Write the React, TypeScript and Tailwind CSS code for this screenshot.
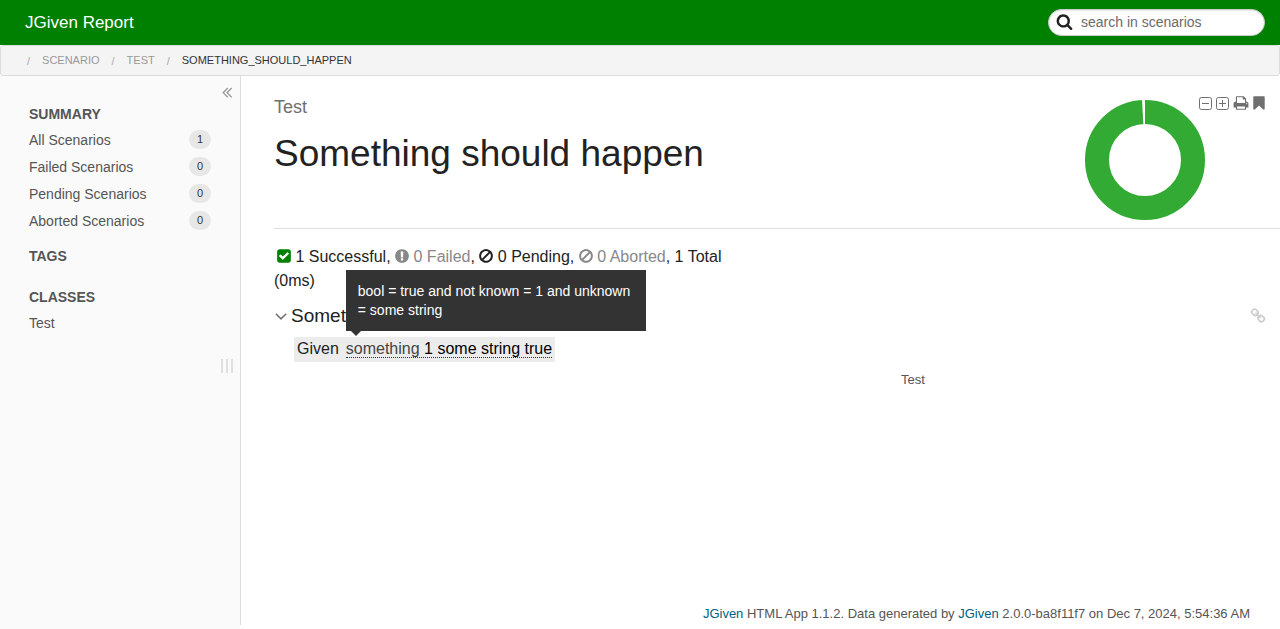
import React from "react";

const glyphs = {
  search:
    "M1216 832q0-185-131.5-316.5t-316.5-131.5-316.5 131.5-131.5 316.5 131.5 316.5 316.5 131.5 316.5-131.5 131.5-316.5zm512 832q0 52-38 90t-90 38q-54 0-90-38l-343-342q-179 124-399 124-143 0-273.5-55.5t-225-150-150-225-55.5-273.5 55.5-273.5 150-225 225-150 273.5-55.5 273.5 55.5 225 150 150 225 55.5 273.5q0 220-124 399l343 343q37 37 37 90z",
  check:
    "M813 1299l614-614q19-19 19-45t-19-45l-102-102q-19-19-45-19t-45 19l-467 467-211-211q-19-19-45-19t-45 19l-102 102q-19 19-19 45t19 45l358 358q19 19 45 19t45-19zm851-883v960q0 119-84.5 203.5t-203.5 84.5h-960q-119 0-203.5-84.5t-84.5-203.5v-960q0-119 84.5-203.5t203.5-84.5h960q119 0 203.5 84.5t84.5 203.5z",
  alert:
    "M896 128q209 0 385.5 103t279.5 279.5 103 385.5-103 385.5-279.5 279.5-385.5 103-385.5-103-279.5-279.5-103-385.5 103-385.5 279.5-279.5 385.5-103zm128 1247v-190q0-14-9-23.5t-22-9.5h-192q-13 0-23 10t-10 23v190q0 13 10 23t23 10h192q13 0 22-9.5t9-23.5zm-2-344l18-621q0-12-10-18-10-8-24-8h-220q-14 0-24 8-10 6-10 18l17 621q0 10 10 17.5t24 7.5h185q14 0 23.5-7.5t10.5-17.5z",
  ban: "M1440 893q0-161-87-295l-754 753q137 89 297 89 111 0 211.5-43.5t173.5-116.5 116-174.5 43-212.5zm-999 299l755-754q-135-91-300-91-148 0-273 73t-198 199-73 274q0 162 89 299zm1223-299q0 157-61 300t-163.5 246-245 164-298.5 61-298.5-61-245-164-163.5-246-61-300 61-299.5 163.5-245.5 245-164 298.5-61 298.5 61 245 164 163.5 245.5 61 299.5z",
  print:
    "M448 1536h896v-256h-896v256zm0-640h896v-384h-160q-40 0-68-28t-28-68v-160h-640v640zm1152 64q0-26-19-45t-45-19-45 19-19 45 19 45 45 19 45-19 19-45zm128 0v416q0 13-9.5 22.5t-22.5 9.5h-224v160q0 40-28 68t-68 28h-960q-40 0-68-28t-28-68v-160h-224q-13 0-22.5-9.5t-9.5-22.5v-416q0-79 56.5-135.5t135.5-56.5h64v-544q0-40 28-68t68-28h672q40 0 88 20t76 48l152 152q28 28 48 76t20 88v256h64q79 0 135.5 56.5t56.5 135.5z",
  bookmark:
    "M1420 128q23 0 44 9 33 13 52.5 41t19.5 62v1289q0 34-19.5 62t-52.5 41q-19 8-44 8-48 0-83-32l-441-424-441 424q-36 33-83 33-23 0-44-9-33-13-52.5-41t-19.5-62v-1289q0-34 19.5-62t52.5-41q21-9 44-9h1048z",
  link: "M1520 1216q0-40-28-68l-208-208q-28-28-68-28-42 0-72 32 3 3 19 18.5t21.5 21.5 15 19 13 25.5 3.5 27.5q0 40-28 68t-68 28q-15 0-27.5-3.5t-25.5-13-19-15-21.5-21.5-18.5-19q-33 31-33 73 0 40 28 68l206 207q27 27 68 27 40 0 68-26l147-146q28-28 28-67zm-703-705q0-40-28-68l-206-207q-28-28-68-28-39 0-68 27l-147 146q-28 28-28 67 0 40 28 68l208 208q27 27 68 27 42 0 72-31-3-3-19-18.5t-21.5-21.5-15-19-13-25.5-3.5-27.5q0-40 28-68t68-28q15 0 27.5 3.5t25.5 13 19 15 21.5 21.5 18.5 19q33-31 33-73zm895 705q0 120-85 203l-147 146q-83 83-203 83-121 0-204-85l-206-207q-83-83-83-203 0-123 88-209l-88-88q-86 88-208 88-120 0-204-84l-208-208q-84-84-84-204t85-203l147-146q83-83 203-83 121 0 204 85l206 207q83 83 83 203 0 123-88 209l88 88q86-88 208-88 120 0 204 84l208 208q84 84 84 204z",
  down: "M1395 736q0 13-10 23l-466 466q-10 10-23 10t-23-10l-466-466q-10-10-10-23t10-23l50-50q10-10 23-10t23 10l393 393 393-393q10-10 23-10t23 10l50 50q10 10 10 23z",
  collapse:
    "M1011 1376q0 13-10 23l-50 50q-10 10-23 10t-23-10l-466-466q-10-10-10-23t10-23l466-466q10-10 23-10t23 10l50 50q10 10 10 23t-10 23l-393 393 393 393q10 10 10 23zm384 0q0 13-10 23l-50 50q-10 10-23 10t-23-10l-466-466q-10-10-10-23t10-23l466-466q10-10 23-10t23 10l50 50q10 10 10 23t-10 23l-393 393 393 393q10 10 10 23z",
};

type GlyphProps = { name: keyof typeof glyphs; className: string; viewBox?: string };

function Glyph({ name, className, viewBox = "0 0 1792 1792" }: GlyphProps) {
  return (
    <svg viewBox={viewBox} fill="currentColor" className={className} aria-hidden="true">
      <path d={glyphs[name]} />
    </svg>
  );
}

function StatusGlyph({ name }: { name: keyof typeof glyphs }) {
  return <Glyph name={name} viewBox="128 0 1536 1792" className="inline-block h-4 w-3.5 align-[-2px]" />;
}

function BoxIcon({ plus = false }: { plus?: boolean }) {
  return (
    <svg viewBox="0 0 13 13" className="size-[13px]" fill="none" stroke="currentColor" aria-hidden="true">
      <rect x="0.5" y="0.5" width="12" height="12" rx="2" />
      <path d={plus ? "M3 6.5h7M6.5 3v7" : "M3 6.5h7"} />
    </svg>
  );
}

const summary = [
  { label: "All Scenarios", count: 1 },
  { label: "Failed Scenarios", count: 0 },
  { label: "Pending Scenarios", count: 0 },
  { label: "Aborted Scenarios", count: 0 },
];

function Header() {
  return (
    <header className="flex h-[45px] items-center justify-between bg-[#008000] pr-[15px] pl-[25px]">
      <a href="#" className="text-[17px] text-white">
        JGiven Report
      </a>
      <form className="flex h-[27px] w-[217px] items-center rounded-full border border-[#ccc] bg-white pb-0.5 pl-[7px] shadow-[inset_0_1px_2px_rgba(0,0,0,0.1)]">
        <button type="button" aria-label="Search" className="text-[#222]">
          <Glyph name="search" className="size-[17px]" />
        </button>
        <input
          type="text"
          aria-label="Search in scenarios"
          placeholder="search in scenarios"
          className="ml-2 min-w-0 flex-1 bg-transparent text-sm text-[#222] outline-none placeholder:text-[#6b6b6b]"
        />
      </form>
    </header>
  );
}

function Breadcrumbs() {
  return (
    <nav
      aria-label="Breadcrumb"
      className="flex h-[31px] items-center gap-3 rounded-[3px] border border-[#dcdcdc] bg-[#f4f4f4] pl-[26px] text-[11px] text-[#999]"
    >
      <span className="pt-0.5 text-[#aaa]">/</span>
      <a href="#">SCENARIO</a>
      <span className="pt-0.5 text-[#aaa]">/</span>
      <a href="#">TEST</a>
      <span className="pt-0.5 text-[#aaa]">/</span>
      <span className="text-[#333]">SOMETHING_SHOULD_HAPPEN</span>
    </nav>
  );
}

function Sidebar() {
  return (
    <aside className="w-60 shrink-0 bg-[#fafafa] text-sm text-[#555]">
      <div className="flex justify-end pt-[7px] pr-1">
        <button type="button" aria-label="Hide navigation" className="text-[#999]">
          <Glyph name="collapse" className="size-[18px]" />
        </button>
      </div>
      <div className="px-[29px]">
        <h2 className="h-[25px] leading-[27px] font-bold">SUMMARY</h2>
        <ul>
          {summary.map((item) => (
            <li key={item.label}>
              <a href="#" className="flex h-[27px] items-center justify-between">
                {item.label}
                <span className="flex h-[19px] w-[22px] items-center justify-center rounded-full bg-[#e7e7e7] text-[11px] text-[#333]">
                  {item.count}
                </span>
              </a>
            </li>
          ))}
        </ul>
        <h2 className="mt-[9px] h-[27px] leading-[27px] font-bold">TAGS</h2>
        <h2 className="mt-3.5 h-[25px] leading-[27px] font-bold">CLASSES</h2>
        <a href="#" className="flex h-[27px] items-center">
          Test
        </a>
      </div>
      <div className="mt-[23px] flex justify-end gap-[3px] pr-[7px]">
        <span className="h-3.5 w-0.5 bg-[#e0e0e0]" />
        <span className="h-3.5 w-0.5 bg-[#e0e0e0]" />
        <span className="h-3.5 w-0.5 bg-[#e0e0e0]" />
      </div>
    </aside>
  );
}

function PageHead() {
  return (
    <div className="relative flex h-[153px] justify-between border-b border-[#ddd]">
      <div className="pt-[18px]">
        <p className="text-lg leading-[26px] text-[#6f6f6f]">Test</p>
        <h1 className="mt-2 text-[37px] leading-[52px] text-[#222]">Something should happen</h1>
      </div>
      <svg viewBox="0 0 120 120" className="mt-6 mr-[75px] size-[120px]" role="img" aria-label="All scenarios successful">
        <circle cx="60" cy="60" r="48" fill="none" stroke="#3a3" strokeWidth="24" />
        <path d="M57 -1L60 -1V25H58.4Z" fill="white" />
      </svg>
      <div className="absolute top-[19px] right-[15px] flex items-center gap-1 text-[#6f6f6f]">
        <button type="button" aria-label="Collapse all"><BoxIcon /></button>
        <button type="button" aria-label="Expand all"><BoxIcon plus /></button>
        <button type="button" aria-label="Print"><Glyph name="print" className="size-4" /></button>
        <button type="button" aria-label="Bookmark">
          <Glyph name="bookmark" viewBox="256 0 1280 1792" className="h-4 w-3" />
        </button>
      </div>
    </div>
  );
}

function Stats() {
  return (
    <p className="w-1/2 pt-4 pr-4 leading-6">
      <span className="ml-[3px] text-[#008000]"><StatusGlyph name="check" /></span> 1 Successful,{" "}
      <span className="text-[#888]"><StatusGlyph name="alert" /> 0 Failed</span>,{" "}
      <StatusGlyph name="ban" /> 0 Pending,{" "}
      <span className="text-[#888]"><StatusGlyph name="ban" /> 0 Aborted</span>, 1 Total (0ms)
    </p>
  );
}

function Scenario() {
  return (
    <section>
      <div className="flex h-[44px] items-center justify-between pt-0.5 pr-3.5">
        <h2 className="flex items-center text-[19px]">
          <button type="button" aria-label="Toggle scenario" className="-ml-[3px] text-[#6f6f6f]">
            <Glyph name="down" className="size-5" />
          </button>
          Something should happen
        </h2>
        <a href="#" aria-label="Link to scenario" className="text-[#ccc]">
          <Glyph name="link" className="size-4" />
        </a>
      </div>
      <div className="ml-5 flex">
        <div className="flex h-[25px] items-start gap-[7px] bg-[#ececec] px-[3px] pt-[3px] leading-[17px]">
          <span>Given</span>
          <span className="relative border-b border-dotted border-[#003f54] text-black">
            <span className="text-[#444]">something</span> 1 some string true
            <span
              role="tooltip"
              className="absolute bottom-[26px] left-0 w-[300px] bg-[#333] px-3 pt-3 pb-[11px] text-sm leading-[19px] text-white"
            >
              bool = true and not known = 1 and unknown = some string
              <svg viewBox="0 0 10 5" className="absolute top-full left-[5px] h-[5px] w-2.5" aria-hidden="true">
                <path d="M0 0h10L5 5z" fill="#333" />
              </svg>
            </span>
          </span>
        </div>
      </div>
      <p className="ml-[627px] pt-2 text-[13px] leading-5 text-[#555]">Test</p>
    </section>
  );
}

export default function App() {
  return (
    <div className="flex min-h-screen flex-col bg-white font-['Liberation_Sans',Arial,sans-serif] text-base text-[#222]">
      <Header />
      <Breadcrumbs />
      <div className="flex flex-1">
        <Sidebar />
        <div className="mb-1 w-px bg-[#ddd]" />
        <div className="flex min-w-0 flex-1 flex-col pl-[33px]">
          <main>
            <PageHead />
            <Stats />
            <Scenario />
          </main>
          <footer className="mt-auto pr-[30px] pb-[5px] text-right text-[13px] leading-5 text-[#555]">
            <a href="#" className="text-[#005f7f]">JGiven</a> HTML App 1.1.2. Data generated by{" "}
            <a href="#" className="text-[#005f7f]">JGiven</a> 2.0.0-ba8f11f7 on Dec 7, 2024, 5:54:36 AM
          </footer>
        </div>
      </div>
    </div>
  );
}
